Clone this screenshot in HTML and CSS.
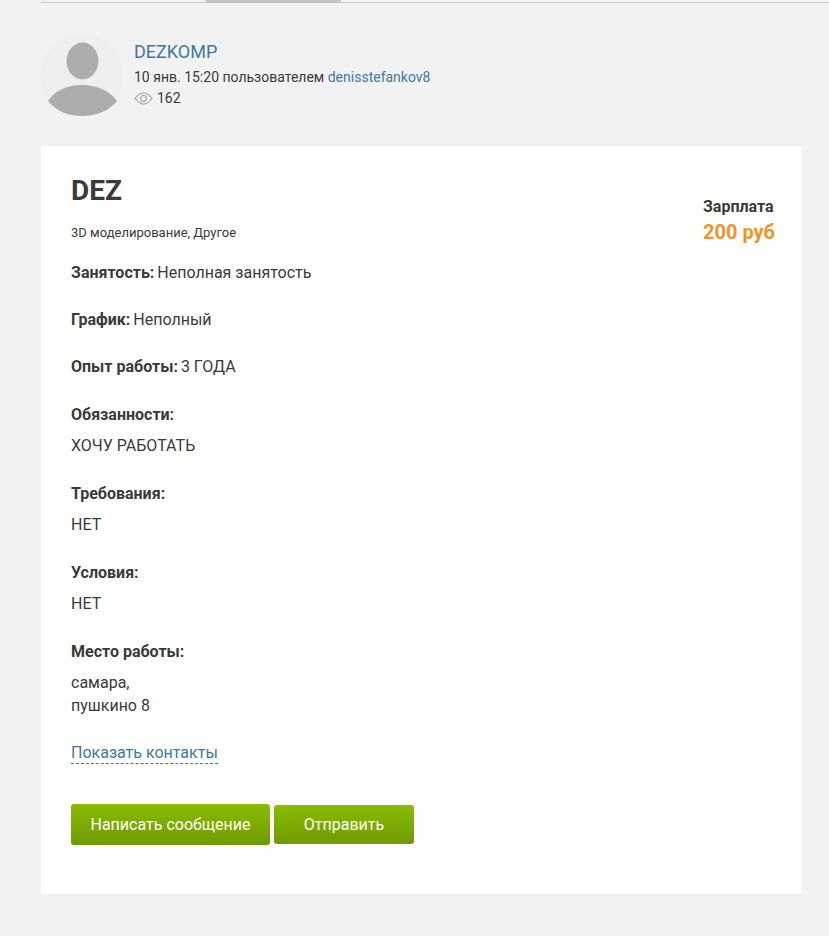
FILE: index.html
```html
<!DOCTYPE html>
<html lang="ru">
<head>
<meta charset="utf-8">
<title>DEZ</title>
<link rel="stylesheet" href="styles.css">
</head>
<body>
<div class="wrap">
  <div class="tabs"><div class="tab-active"></div></div>
  <header class="author">
    <svg class="avatar" viewBox="0 0 82 82" aria-hidden="true">
      <circle cx="41" cy="41" r="41" fill="#efefef"/>
      <ellipse cx="41.500" cy="27" rx="16" ry="18.500" fill="#adadad"/>
      <path d="M7 67 C14 56 27 51 41 51 C55 51 68 56 76 67 C68 77 55 82 41 82 C27 82 15 77 7 67 Z" fill="#adadad"/>
    </svg>
    <div class="author-info">
      <a class="author-name">DEZKOMP</a>
      <div class="meta">10 янв. 15:20 пользователем <a class="link">denisstefankov8</a></div>
      <div class="meta views">
        <svg class="eye" viewBox="0 0 20 14" aria-hidden="true">
          <path d="M0.800 7 C4 2.800 7 1 10 1 C13 1 16 2.800 19.200 7 C16 11.200 13 13 10 13 C7 13 4 11.200 0.800 7 Z" fill="none" stroke="#9c9c9c" stroke-width="1.100"/>
          <circle cx="10" cy="7" r="3.200" fill="none" stroke="#9c9c9c" stroke-width="1.100"/>
        </svg>
        <span>162</span>
      </div>
    </div>
  </header>
  <main class="card">
    <div class="salary">
      <div class="salary-label">Зарплата</div>
      <div class="salary-value">200 руб</div>
    </div>
    <h1 class="title">DEZ</h1>
    <div class="category">3D моделирование, Другое</div>
    <p class="row first"><b>Занятость:</b> Неполная занятость</p>
    <p class="row"><b>График:</b> Неполный</p>
    <p class="row"><b>Опыт работы:</b> 3 ГОДА</p>
    <div class="block"><b>Обязанности:</b><p>ХОЧУ РАБОТАТЬ</p></div>
    <div class="block"><b>Требования:</b><p>НЕТ</p></div>
    <div class="block"><b>Условия:</b><p>НЕТ</p></div>
    <div class="block"><b>Место работы:</b><p>самара,<br>пушкино 8</p></div>
    <a class="contacts">Показать контакты</a>
    <div class="actions">
      <button class="btn btn-large">Написать сообщение</button>
      <button class="btn btn-small">Отправить</button>
    </div>
  </main>
</div>
</body>
</html>
```
FILE: styles.css
```css
* { box-sizing: border-box; }
html, body { margin: 0; padding: 0; }
body {
  background: #f2f2f2;
  color: #3a3a3a;
  font-family: Roboto, "Liberation Sans", sans-serif;
  font-size: 16px;
  height: 936px;
  overflow: hidden;
}
.wrap { padding-left: 41px; }
.tabs {
  height: 3px;
  border-bottom: 1px solid #c9c9c9;
  padding-left: 165px;
}
.tab-active { width: 135px; height: 3px; background: #c4c4c4; }
.author {
  display: flex;
  align-items: flex-start;
  padding-top: 31px;
  height: 143px;
}
.avatar { width: 82px; height: 82px; flex: none; }
.author-info { margin-left: 11px; }
.author-name {
  display: block;
  color: #44779f;
  font-size: 18px;
  line-height: 21px;
  margin-top: 7px;
}
.meta { font-size: 14px; line-height: 20px; color: #3a3a3a; }
.author-name + .meta { margin-top: 5px; }
.link { color: #44779f; }
.views { display: flex; align-items: center; margin-top: 1px; }
.eye { width: 19px; height: 13px; margin-right: 4px; }
.card {
  position: relative;
  width: 760px;
  height: 748px;
  background: #fff;
  padding: 26px 30px 0;
}
.salary { position: absolute; top: 51px; right: 26px; }
.salary-label { font-size: 16px; font-weight: 700; line-height: 20px; }
.salary-value { font-size: 20px; font-weight: 700; color: #f39325; line-height: 26px; margin-top: 2px; }
.title { margin: 0; font-size: 28px; font-weight: 700; line-height: 37px; }
.category { font-size: 13px; line-height: 16px; margin-top: 16px; }
.row { margin: 0; font-size: 16px; line-height: 24px; margin-top: 23px; }
.row.first { margin-top: 20px; }
.row b { font-weight: 700; margin-right: -1px; }
.block { margin-top: 25px; line-height: 23px; }
.row + .block { margin-top: 24px; }
.block b { display: block; font-weight: 700; }
.block p { margin: 8px 0 0; line-height: 23px; }
.contacts {
  display: inline-block;
  margin-top: 25px;
  color: #44779f;
  line-height: 21px;
  border-bottom: 1px dashed #44779f;
}
.actions { display: flex; align-items: center; gap: 4px; margin-top: 40px; }
.btn {
  border: 0;
  border-radius: 3px;
  color: #fff;
  font-family: inherit;
  font-size: 16px;
  background: linear-gradient(#8abc00, #6f9a00);
  padding: 0;
}
.btn-large { width: 199px; height: 41px; }
.btn-small { width: 140px; height: 39px; }
```
